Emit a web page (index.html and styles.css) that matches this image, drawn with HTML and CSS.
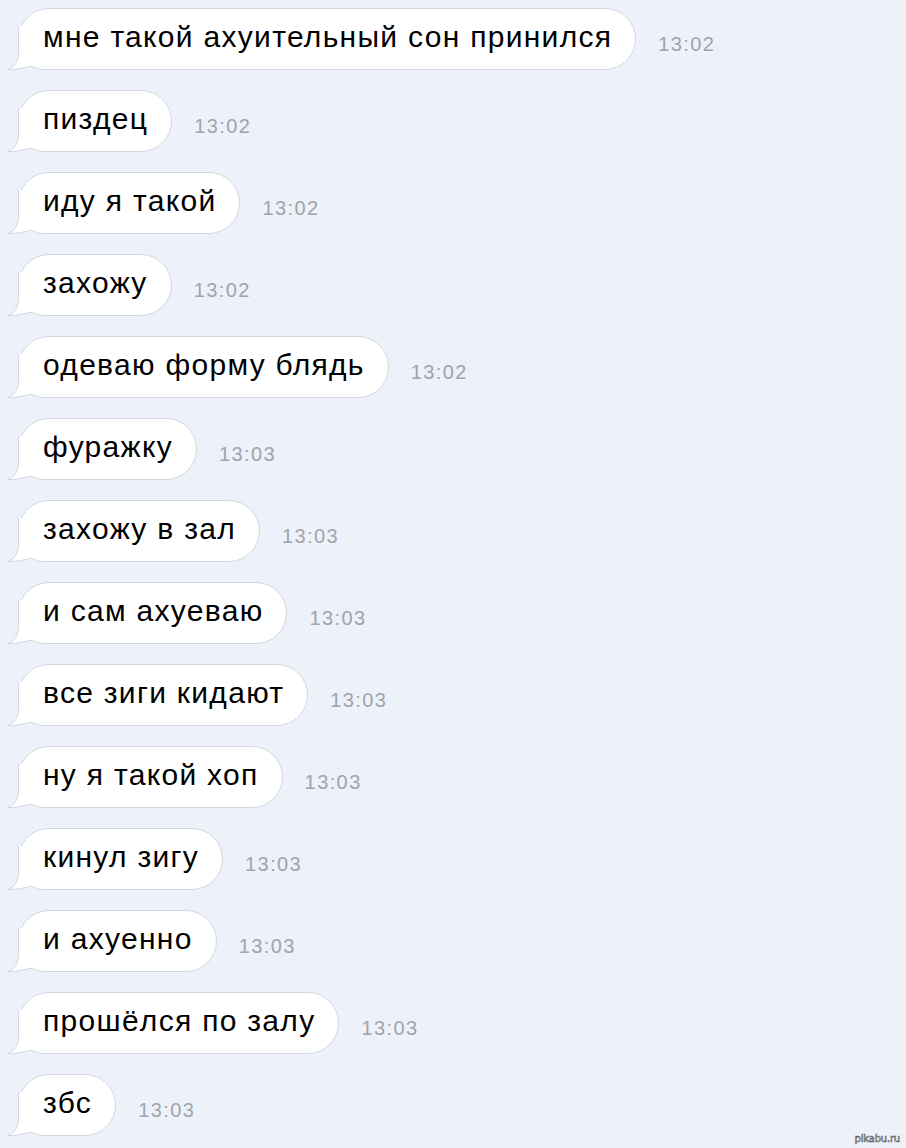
FILE: index.html
```html
<!DOCTYPE html>
<html lang="ru">
<head>
    <meta charset="UTF-8">
    <meta name="viewport" content="width=device-width, initial-scale=1.0">
    <title>Сообщения</title>
    <link rel="stylesheet" href="styles.css">
</head>
<body>
    <!-- хвостик пузыря, один на все сообщения -->
    <svg class="defs" width="0" height="0">
        <symbol id="tail" viewBox="0 0 44 44">
            <path d="M11.5 0 V26 C11.5 36 7 41.5 0.5 43.5 C8 44 16 42 23 40.5 C27 40 29 43.5 36 43.5 H44 V0 Z" fill="#fff"/>
            <path d="M11.5 0 V26 C11.5 36 7 41.5 0.5 43.5 C8 44 16 42 23 40.5 C27 40 29 43.5 36 43.5 H44" fill="none" stroke="#d3d7de"/>
        </symbol>
    </svg>

    <div class="chat">
        <div class="msg">
            <div class="bubble"><svg class="tail"><use href="#tail"/></svg><span class="text">мне такой ахуительный сон принился</span></div>
            <span class="time">13:02</span>
        </div>
        <div class="msg">
            <div class="bubble"><svg class="tail"><use href="#tail"/></svg><span class="text">пиздец</span></div>
            <span class="time">13:02</span>
        </div>
        <div class="msg">
            <div class="bubble"><svg class="tail"><use href="#tail"/></svg><span class="text">иду я такой</span></div>
            <span class="time">13:02</span>
        </div>
        <div class="msg">
            <div class="bubble"><svg class="tail"><use href="#tail"/></svg><span class="text">захожу</span></div>
            <span class="time">13:02</span>
        </div>
        <div class="msg">
            <div class="bubble"><svg class="tail"><use href="#tail"/></svg><span class="text">одеваю форму блядь</span></div>
            <span class="time">13:02</span>
        </div>
        <div class="msg">
            <div class="bubble"><svg class="tail"><use href="#tail"/></svg><span class="text">фуражку</span></div>
            <span class="time">13:03</span>
        </div>
        <div class="msg">
            <div class="bubble"><svg class="tail"><use href="#tail"/></svg><span class="text">захожу в зал</span></div>
            <span class="time">13:03</span>
        </div>
        <div class="msg">
            <div class="bubble"><svg class="tail"><use href="#tail"/></svg><span class="text">и сам ахуеваю</span></div>
            <span class="time">13:03</span>
        </div>
        <div class="msg">
            <div class="bubble"><svg class="tail"><use href="#tail"/></svg><span class="text">все зиги кидают</span></div>
            <span class="time">13:03</span>
        </div>
        <div class="msg">
            <div class="bubble"><svg class="tail"><use href="#tail"/></svg><span class="text">ну я такой хоп</span></div>
            <span class="time">13:03</span>
        </div>
        <div class="msg">
            <div class="bubble"><svg class="tail"><use href="#tail"/></svg><span class="text">кинул зигу</span></div>
            <span class="time">13:03</span>
        </div>
        <div class="msg">
            <div class="bubble"><svg class="tail"><use href="#tail"/></svg><span class="text">и ахуенно</span></div>
            <span class="time">13:03</span>
        </div>
        <div class="msg">
            <div class="bubble"><svg class="tail"><use href="#tail"/></svg><span class="text">прошёлся по залу</span></div>
            <span class="time">13:03</span>
        </div>
        <div class="msg">
            <div class="bubble"><svg class="tail"><use href="#tail"/></svg><span class="text">збс</span></div>
            <span class="time">13:03</span>
        </div>
    </div>

    <div class="watermark">pikabu.ru</div>
</body>
</html>
```

FILE: styles.css
```css
html,
body {
    margin: 0;
    height: 100%;
}

body {
    background-color: #edf1f9;
    font-family: "Liberation Sans", Arial, sans-serif;
    position: relative;
    overflow: hidden;
}

.defs {
    position: absolute;
    width: 0;
    height: 0;
}

.chat {
    display: flex;
    flex-direction: column;
    align-items: flex-start;
    gap: 20px;
    padding: 8px 0 0 18px;
}

.msg {
    display: flex;
    align-items: flex-end;
    gap: 22px;
}

.bubble {
    position: relative;
    background-color: #ffffff;
    border: 1px solid #d3d7de;
    border-radius: 31px;
    padding: 10px 24px 14px;
    line-height: 36px;
    font-size: 30px;
    letter-spacing: 1.3px;
    color: #000;
    white-space: nowrap;
}

.tail {
    position: absolute;
    left: -12px;
    bottom: -1px;
    width: 44px;
    height: 44px;
    overflow: visible;
}

.text {
    position: relative;
    margin-right: -1px;
}

.time {
    font-size: 20px;
    line-height: 20px;
    letter-spacing: 1.4px;
    color: #a0a4ab;
    padding-bottom: 16px;
}

.watermark {
    position: absolute;
    right: 6px;
    bottom: 4px;
    font-family: "DejaVu Sans", sans-serif;
    font-size: 10px;
    color: #ffffff;
    -webkit-text-stroke: 0.6px #55585e;
    letter-spacing: -0.2px;
}
```
